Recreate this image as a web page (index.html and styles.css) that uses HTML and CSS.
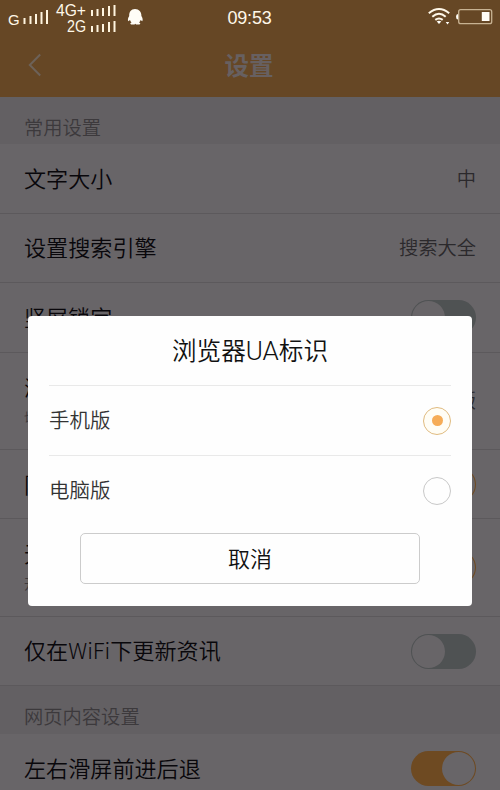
FILE: index.html
```html
<!DOCTYPE html>
<html lang="zh-CN">
<head>
<meta charset="utf-8">
<title>设置</title>
<link rel="stylesheet" href="styles.css">
</head>
<body>
<div class="screen">
  <header class="header">
    <div class="status">
      <svg class="signals" width="150" height="36" viewBox="0 0 150 36">
        <g class="net">
          <text x="8" y="24.500" font-size="15">G</text>
          <text x="56" y="16" font-size="16" textLength="30" lengthAdjust="spacingAndGlyphs">4G+</text>
          <text x="67" y="32" font-size="16" textLength="19" lengthAdjust="spacingAndGlyphs">2G</text>
        </g>
        <path class="bars" d="M24.500 24v-6M30.500 24v-8M36 24v-10M41.500 24v-12M47 24v-14M92 16v-6M97.500 16v-7M103 16v-8M109 16v-10M114.500 16v-11M92 32v-6M97.500 32v-7M103 32v-8M109 32v-10M114.500 32v-11"/>
        <path class="solid" d="M135 9c-4 0-6 3-5.800 7-1.300 2-1.700 4-.8 5.300l1.600-1.300c.2 1 .7 1.800 1.500 2.500-1.500.6-1.600 1.500-.3 1.900h3.300l.8-.7.800.7h3.300c1.300-.4 1.200-1.300-.3-1.900.8-.7 1.300-1.500 1.500-2.500l1.600 1.300c.9-1.300.5-3.300-.8-5.300.2-4-2.400-7-6.400-7z"/>
      </svg>
      <span class="clock">09:53</span>
      <svg class="power" width="72" height="36" viewBox="0 0 72 36">
        <path class="arc" d="M.8 13.200Q11 4.800 21.200 13.200M4.300 16.700Q11 10.800 17.700 16.700M7.300 19.900Q11 17 14.700 19.900"/>
        <path class="solid" d="M8.700 21.500q2.300-1.400 4.600 0L11 24zM17.700 22h3.600l-1.800 2.400zM53.800 12h7.700v9h-7.700z"/>
        <rect class="case" x="30.700" y="9.700" width="33" height="14" rx="2"/>
        <path class="tip" d="M30 14q-2 0-2 2.700t2 2.700z"/>
      </svg>
    </div>
    <div class="titlebar">
      <svg class="back" width="14" height="24" viewBox="0 0 14 24"><path d="M12.200 1.500 1.800 12l10.400 10.500"/></svg>
      <h1>设置</h1>
    </div>
  </header>
  <main>
    <h2 class="section">常用设置</h2>
    <div class="row"><span>文字大小</span><span class="value">中</span></div>
    <div class="row"><span>设置搜索引擎</span><span class="value">搜索大全</span></div>
    <div class="row"><span>竖屏锁定</span><i class="switch"></i></div>
    <div class="row tall"><div>浏览器UA标识<small>切换</small></div><span class="value">手机版</span></div>
    <div class="row"><span>阻止广告</span><i class="switch on"></i></div>
    <div class="row tall"><div>无图模式<small>开启</small></div><i class="switch on"></i></div>
    <div class="row"><span>仅在<span class="latin-row">WiFi</span>下更新资讯</span><i class="switch"></i></div>
    <h2 class="section second">网页内容设置</h2>
    <div class="row"><span>左右滑屏前进后退</span><i class="switch on"></i></div>
  </main>
  <div class="dialog" role="dialog">
    <h3>浏览器<span class="latin">UA</span>标识</h3>
    <div class="option"><span>手机版</span><i class="radio checked"></i></div>
    <div class="option"><span>电脑版</span><i class="radio"></i></div>
    <button>取消</button>
  </div>
</div>
</body>
</html>
```
FILE: styles.css
```css
* { box-sizing: border-box; }
body { margin: 0; font-family: "Noto Sans CJK SC", sans-serif; font-weight: 350; }
.screen { position: relative; width: 500px; height: 790px; overflow: hidden; background: #686568; color: #09070b; }
.header { height: 97px; background: #664725; }
.status { height: 36px; display: grid; grid-template-columns: 150px 1fr 72px; }
.net text { font-family: "Liberation Sans", sans-serif; fill: #fff8e9; }
.bars { stroke: #fff5df; stroke-width: 2; }
.solid, .tip { fill: #fffdf7; }
.arc { fill: none; stroke: #fff8e9; stroke-width: 2; }
.case { fill: none; stroke: #c7b292; stroke-width: 1.3; }
.clock { font: 18px/36px "Liberation Sans", sans-serif; letter-spacing: -.2px; color: #fff8e9; padding-left: 77.5px; }
.titlebar { height: 61px; display: grid; grid-template-columns: 28px 1fr 28px; align-items: center; }
.back { margin: -3px 0 0 28px; fill: none; stroke: #6d6259; stroke-width: 2; }
h1 { margin: -3px 0 0; padding-right: 2px; text-align: center; font-size: 24.500px; line-height: 36px; font-weight: 700; color: #676061; }
.section { margin: 0; height: 47px; padding: 15px 24px 0; background: #636063; font-size: 19.300px; line-height: 30px; font-weight: 350; color: #3c393c; }
.second { height: 48px; }
.row { height: 69.500px; padding: 0 24px 1px; display: flex; align-items: center; justify-content: space-between; border-bottom: 1px solid #5c595c; font-size: 22.100px; line-height: 32px; }
.row > :first-child { margin-top: -2px; }
.tall { height: 97.300px; }
.row small { display: block; font-size: 14px; line-height: 24px; margin-top: 3px; color: #3d3a3d; }
.value { font-size: 19.300px; color: #2b292c; }
.latin-row { font-weight: 300; }
.switch { width: 65px; height: 35px; margin-top: 2px; padding: 1px; border-radius: 18px; background: #4f5253; display: flex; }
.switch::after { content: ""; width: 33px; height: 33px; border-radius: 50%; background: #686568; }
.on { background: #6e4a22; justify-content: flex-end; }
.dialog { position: absolute; left: 28px; top: 316px; width: 444px; height: 290px; padding: 0 21px; border-radius: 4px; background: #fefefe; }
h3 { margin: 0; height: 69px; font-size: 24.600px; line-height: 66px; font-weight: 350; text-align: center; color: #111; }
.latin { font-family: Roboto, sans-serif; font-size: 26px; font-weight: 300; }
.option { height: 70px; border-top: 1px solid #e9e9e9; display: flex; align-items: center; justify-content: space-between; font-size: 20.500px; color: #333; }
.option span { margin-top: -3px; }
.radio { width: 28px; height: 28px; border-radius: 50%; border: 1px solid #c8c8c8; display: grid; place-items: center; }
.checked { border-color: #e0bb80; background: #fffdf5; }
.checked::after { content: ""; width: 11px; height: 11px; border-radius: 50%; background: #f6ac57; }
button { display: block; margin: 8px auto 0; width: 340px; height: 51px; border: 1px solid #ccc; border-radius: 5px; background: #fefefe; font: 350 22px/32px "Noto Sans CJK SC", sans-serif; color: #111; padding: 0 0 3px; }
```
